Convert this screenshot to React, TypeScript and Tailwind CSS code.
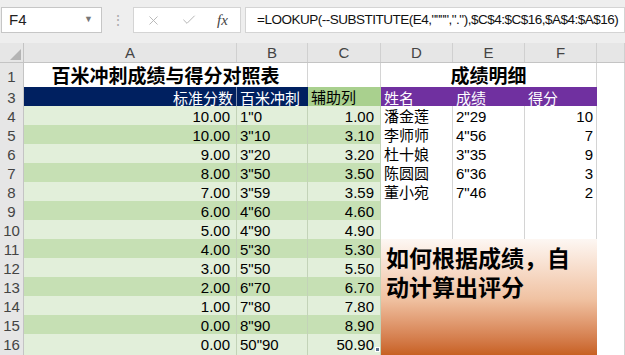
import { X, Check } from "lucide-react";

const scores = [
  ["10.00", '1"0', "1.00"],
  ["10.00", '3"10', "3.10"],
  ["9.00", '3"20', "3.20"],
  ["8.00", '3"50', "3.50"],
  ["7.00", '3"59', "3.59"],
  ["6.00", '4"60', "4.60"],
  ["5.00", '4"90', "4.90"],
  ["4.00", '5"30', "5.30"],
  ["3.00", '5"50', "5.50"],
  ["2.00", '6"70', "6.70"],
  ["1.00", '7"80', "7.80"],
  ["0.00", '8"90', "8.90"],
  ["0.00", '50"90', "50.90"],
];

const people = [
  ["潘金莲", '2"29', "10"],
  ["李师师", '4"56', "7"],
  ["杜十娘", '3"35', "9"],
  ["陈圆圆", '6"36', "3"],
  ["董小宛", '7"46', "2"],
];

const gridCols = "grid grid-cols-[24px_213px_71px_73px_72px_72px_72px_28px]";
const font = "font-['Liberation_Sans','Noto_Sans_CJK_SC',sans-serif]";
const rowHead =
  "flex items-center justify-center bg-[#e6e6e6] border-r border-b border-[#c4c4c4] text-[15px] text-[#444]";
const whiteCell = "border-r border-b border-[#d4d4d4] bg-white";

export default function App() {
  return (
    <div className={`relative w-[625px] h-[355px] overflow-hidden bg-[#e6e6e6] ${font}`}>
      {/* Formula bar */}
      <div className="h-[43px] flex items-start pt-[7px] bg-[#eeeeee]">
        <div className="w-[101px] h-[26px] ml-[1px] bg-white border border-[#c6c6c6] flex items-center justify-between pl-[7px] pr-[8px]">
          <span className="text-[15px] text-[#222]">F4</span>
          <span className="text-[9px] text-[#777]">▼</span>
        </div>
        <div className="w-[31px] h-[26px] flex items-center justify-center text-[#aaa] text-[14px]">⋮</div>
        <div className="w-[108px] h-[26px] bg-white border border-[#d4d4d4] flex items-center">
          <X className="w-[15px] h-[15px] text-[#b5b5b5] ml-[12px]" strokeWidth={1.5} />
          <Check className="w-[16px] h-[16px] text-[#b5b5b5] ml-[20px]" strokeWidth={1.5} />
          <span className="ml-[20px] text-[15px] italic text-[#444] font-['Liberation_Serif',serif]">fx</span>
        </div>
        <div className="flex-1 h-[26px] ml-[4px] bg-white border border-[#d4d4d4] flex items-center pl-[11px] text-[13.5px] tracking-[-0.5px] text-[#111] whitespace-nowrap overflow-hidden">
          =LOOKUP(--SUBSTITUTE(E4,"""","."),$C$4:$C$16,$A$4:$A$16)
        </div>
      </div>

      {/* Column headers */}
      <div className={`${gridCols} h-[20px] bg-[#e6e6e6] border-b border-[#c4c4c4] text-[15px] text-[#444]`}>
        <div className="border-r border-[#c4c4c4] flex items-end justify-end pr-[2px] pb-[2px]">
          <svg width="11" height="11" viewBox="0 0 11 11">
            <polygon points="11,0 11,11 0,11" fill="#b4b4b4" />
          </svg>
        </div>
        {["A", "B", "C", "D", "E", "F", ""].map((l, i) => (
          <div key={i} className="border-r border-[#d0d0d0] flex items-center justify-center leading-none">
            {l}
          </div>
        ))}
      </div>

      {/* Row 1 */}
      <div className={`${gridCols} h-[24px]`}>
        <div className={rowHead}>1</div>
        <div className={`col-span-2 ${whiteCell} flex items-center justify-center text-[19px] font-bold text-black`}>
          百米冲刺成绩与得分对照表
        </div>
        <div className={whiteCell}></div>
        <div className={`col-span-3 ${whiteCell} flex items-center justify-center text-[19px] font-bold text-black`}>
          成绩明细
        </div>
        <div className={whiteCell}></div>
      </div>

      {/* Row 3 */}
      <div className={`${gridCols} h-[19px] text-[15px]`}>
        <div className={rowHead}>3</div>
        <div className="bg-[#002060] border-r border-[#8090b0] text-white flex items-center justify-end pr-[3px]">标准分数</div>
        <div className="bg-[#002060] text-white flex items-center pl-[3px]">百米冲刺</div>
        <div className="bg-[#a9d08e] text-black flex items-center pl-[3px] border-b border-[#c3d3b8]">辅助列</div>
        <div className="bg-[#7030a0] text-white flex items-center pl-[3px]">姓名</div>
        <div className="bg-[#7030a0] text-white flex items-center pl-[3px]">成绩</div>
        <div className="bg-[#7030a0] text-white flex items-center pl-[3px]">得分</div>
        <div className={whiteCell}></div>
      </div>

      {/* Data rows */}
      {scores.map((s, i) => {
        const green = i % 2 === 0 ? "bg-[#e2efda]" : "bg-[#c6e0b4]";
        const g = `${green} border-r border-b border-[#c3d3b8] flex items-center`;
        const p = people[i];
        return (
          <div key={i} className={`${gridCols} h-[19px] text-[15px] text-black`}>
            <div className={rowHead}>{i + 4}</div>
            <div className={`${g} justify-end pr-[6px]`}>{s[0]}</div>
            <div className={`${g} pl-[3px]`}>{s[1]}</div>
            <div className={`${g} justify-end pr-[6px]`}>{s[2]}</div>
            <div className={`${whiteCell} flex items-center pl-[3px]`}>{p ? p[0] : ""}</div>
            <div className={`${whiteCell} flex items-center pl-[3px]`}>{p ? p[1] : ""}</div>
            <div className={`${whiteCell} flex items-center justify-end pr-[3px]`}>{p ? p[2] : ""}</div>
            <div className={whiteCell}></div>
          </div>
        );
      })}

      {/* Text box */}
      <div className="absolute left-[381px] top-[239px] w-[216px] h-[120px] bg-linear-to-b from-[#fdf7f3] via-[#f0c2a2] to-[#c45910] pt-[4px] pl-[5px] text-[23px] leading-[29px] font-bold text-black font-['Noto_Sans_CJK_SC',sans-serif]">
        <div>如何根据成绩，自</div>
        <div>动计算出评分</div>
      </div>

      {/* Fill handle */}
      <div className="absolute left-[375px] top-[347px] w-[5px] h-[5px] bg-[#5a6f8c] border border-white"></div>
    </div>
  );
}
